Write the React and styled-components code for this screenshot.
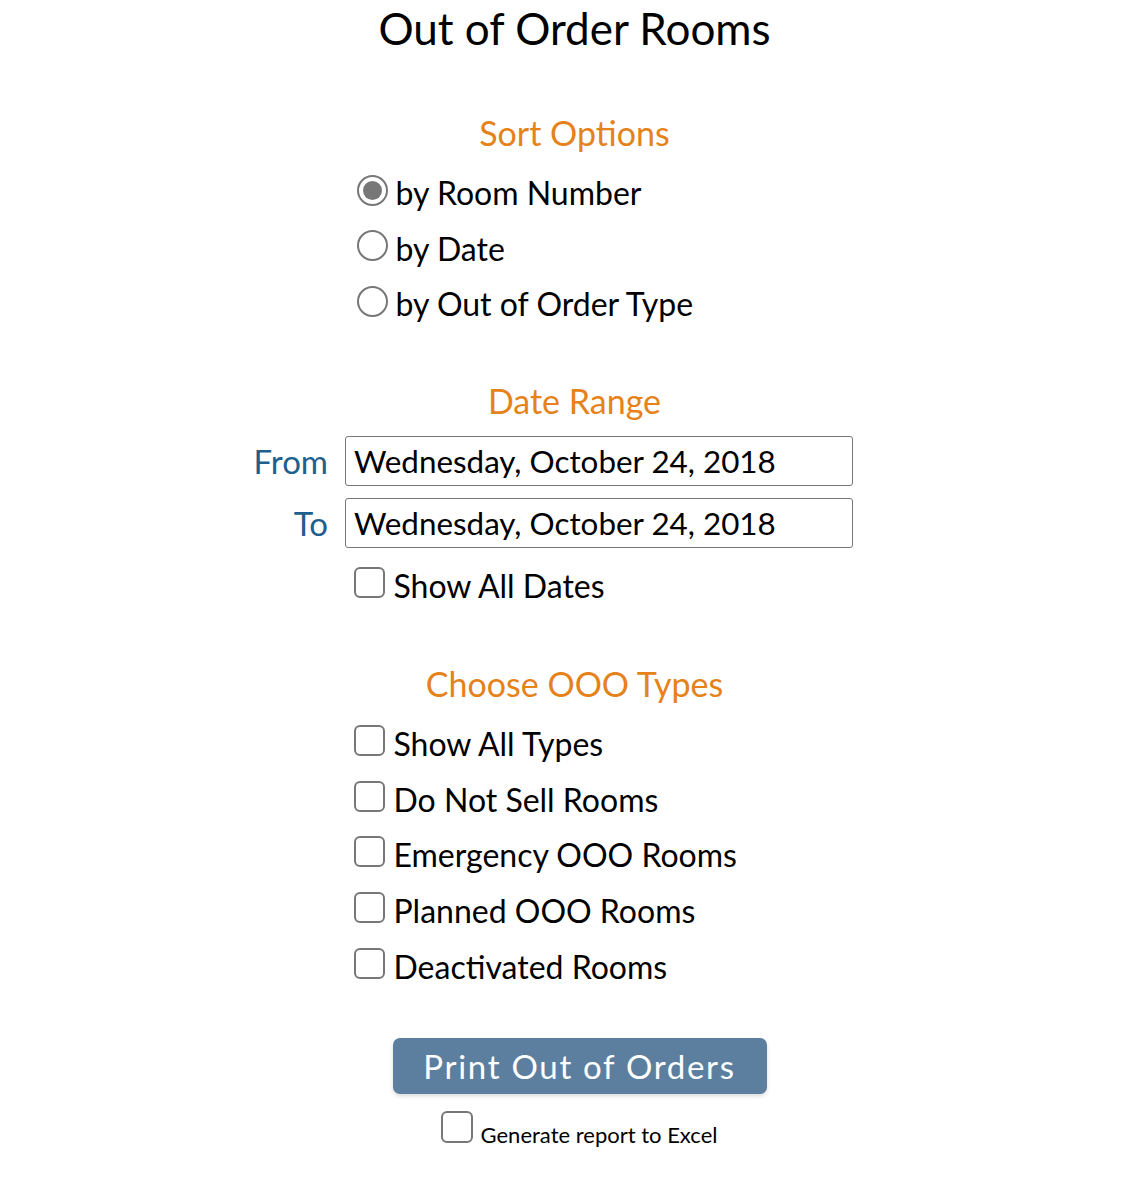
import React from "react";
import styled, { createGlobalStyle } from "styled-components";

const Global = createGlobalStyle`
  html, body { margin: 0; padding: 0; background: #fff; }
  body { font-family: Lato, "Open Sans", sans-serif; color: #000; }
`;

const Page = styled.div`
  width: 1125px;
  box-sizing: border-box;
  padding: 0 0 40px 24px;
  display: flex;
  flex-direction: column;
  align-items: center;
`;

const Title = styled.h1`
  margin: 4px 0 0;
  font-weight: 400;
  font-size: 44px;
  line-height: 48px;
`;

const SectionTitle = styled.h2`
  margin: ${(p) => p.$mt}px 0 0;
  font-weight: 400;
  font-size: 34px;
  line-height: 40px;
  color: #e6821a;
  text-align: center;
`;

const OptionList = styled.div`
  width: 500px;
  box-sizing: border-box;
  display: flex;
  flex-direction: column;
  margin-top: ${(p) => p.$mt || 0}px;
  padding-left: ${(p) => p.$pl || 0}px;
`;

const Option = styled.label`
  display: flex;
  align-items: center;
  height: ${(p) => p.$h || 56}px;
  font-size: 32px;
  gap: ${(p) => p.$gap || 8}px;
`;

const Radio = styled.span`
  width: 31px;
  height: 31px;
  box-sizing: border-box;
  border-radius: 50%;
  border: 2px solid #777;
  display: flex;
  align-items: center;
  justify-content: center;
  flex: none;
  margin-top: -5px;
  &::after {
    content: "";
    width: 19px;
    height: 19px;
    border-radius: 50%;
    background: ${(p) => (p.$checked ? "#777" : "transparent")};
  }
`;

const Box = styled.span`
  width: ${(p) => p.$size || 31}px;
  height: ${(p) => p.$size || 31}px;
  box-sizing: border-box;
  border-radius: 6px;
  border: 2px solid #777;
  flex: none;
  margin-top: ${(p) => (p.$flat ? 0 : -6)}px;
`;

const DateGrid = styled.div`
  width: 740px;
  display: grid;
  grid-template-columns: 1fr 508px;
  column-gap: 17px;
  row-gap: 12px;
  margin-top: 15px;
  margin-left: -183px;
  align-items: center;
`;

const DateLabel = styled.span`
  font-size: 33px;
  color: #1d5f8e;
  text-align: right;
`;

const DateInput = styled.div`
  height: 50px;
  box-sizing: border-box;
  border: 1px solid #777;
  border-radius: 3px;
  font-size: 31.4px;
  display: flex;
  align-items: center;
  padding-left: 8px;
`;

const Button = styled.button`
  margin-top: 44px;
  margin-left: 10px;
  width: 374px;
  height: 56px;
  background: #5c7f9f;
  color: #fff;
  border: none;
  border-radius: 7px;
  font-family: Lato, sans-serif;
  font-size: 33px;
  letter-spacing: 1.7px;
  box-shadow: 0 2px 4px rgba(0, 0, 0, 0.15);
  padding: 0;
`;

const ExcelRow = styled.label`
  display: flex;
  align-items: flex-start;
  gap: 8px;
  margin-top: 17px;
  margin-left: 9px;
`;

const ExcelText = styled.span`
  font-size: 22px;
  line-height: 26px;
  padding-top: 11px;
`;

export default function App() {
  return (
    <Page>
      <Global />
      <Title>Out of Order Rooms</Title>
      <SectionTitle $mt={61}>Sort Options</SectionTitle>
      <OptionList $mt={12} $pl={32}>
        <Option $h={55.5}><Radio $checked />by Room Number</Option>
        <Option $h={55.5}><Radio />by Date</Option>
        <Option $h={55.5}><Radio />by Out of Order Type</Option>
      </OptionList>
      <SectionTitle $mt={49}>Date Range</SectionTitle>
      <DateGrid>
        <DateLabel>From</DateLabel>
        <DateInput>Wednesday, October 24, 2018</DateInput>
        <DateLabel>To</DateLabel>
        <DateInput>Wednesday, October 24, 2018</DateInput>
      </DateGrid>
      <OptionList $mt={10} $pl={29}>
        <Option $gap={9}><Box />Show All Dates</Option>
      </OptionList>
      <SectionTitle $mt={50}>Choose OOO Types</SectionTitle>
      <OptionList $mt={12} $pl={29}>
        <Option $h={55.75} $gap={9}><Box />Show All Types</Option>
        <Option $h={55.75} $gap={9}><Box />Do Not Sell Rooms</Option>
        <Option $h={55.75} $gap={9}><Box />Emergency OOO Rooms</Option>
        <Option $h={55.75} $gap={9}><Box />Planned OOO Rooms</Option>
        <Option $h={55.75} $gap={9}><Box />Deactivated Rooms</Option>
      </OptionList>
      <Button>Print Out of Orders</Button>
      <ExcelRow>
        <Box $size={32} $flat />
        <ExcelText>Generate report to Excel</ExcelText>
      </ExcelRow>
    </Page>
  );
}
